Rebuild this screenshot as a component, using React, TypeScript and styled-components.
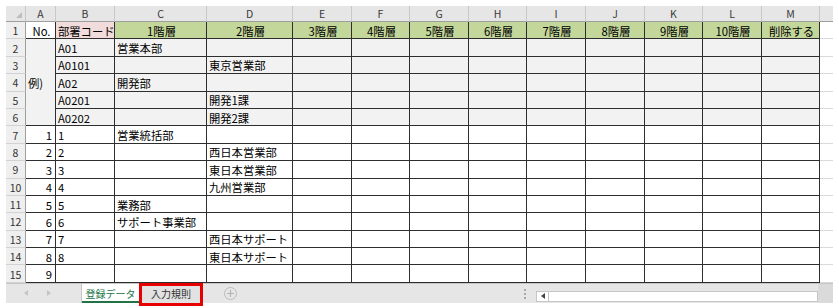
import React from "react";
import styled, { createGlobalStyle } from "styled-components";

const GlobalStyle = createGlobalStyle`
  html, body { margin: 0; padding: 0; background: #ffffff; }
  * { box-sizing: border-box; }
`;

const FONT = `"Noto Sans CJK JP", "Noto Sans", "Liberation Sans", sans-serif`;
const COLS = [20, 30, 59, 92, 86, 59, 58, 59, 58, 59, 59, 58, 59, 58, 13];
const LETTERS = ["A", "B", "C", "D", "E", "F", "G", "H", "I", "J", "K", "L", "M"];
const DARK = "#2e2e2e";

const Frame = styled.div`
  width: 839px;
  height: 308px;
  padding: 6px 6px 0 6px;
  background: #ffffff;
  font-family: ${FONT};
  overflow: hidden;
`;

const SheetGrid = styled.div`
  display: grid;
  grid-template-columns: ${COLS.map((c) => `${c}px`).join(" ")};
  grid-template-rows: 16px repeat(15, 17.4px);
  width: 827px;
`;

const Corner = styled.div`
  background: #e6e6e6;
  border-right: 1px solid #c8c8c8;
  border-bottom: 1px solid #9e9e9e;
  position: relative;
  &::after {
    content: "";
    position: absolute;
    right: 3px;
    bottom: 3px;
    width: 0;
    height: 0;
    border-left: 6px solid transparent;
    border-bottom: 6px solid #bdbdbd;
  }
`;

const ColHeader = styled.div`
  background: #e6e6e6;
  border-right: 1px solid #c8c8c8;
  border-bottom: 1px solid #9e9e9e;
  color: #3a3a3a;
  font-size: 10.5px;
  line-height: 15px;
  text-align: center;
`;

const RowHeader = styled.div`
  background: #efefef;
  border-right: 1px solid #9e9e9e;
  border-bottom: 1px solid #d2d2d2;
  color: #333333;
  font-size: 10.5px;
  display: flex;
  align-items: center;
  justify-content: center;
  padding-top: 1px;
`;

const Cell = styled.div<{ $bg?: string; $align?: "left" | "center" | "right"; $span?: number }>`
  background: ${(p) => p.$bg ?? "#ffffff"};
  border-right: 1px solid ${DARK};
  border-bottom: 1px solid ${DARK};
  color: #000000;
  font-size: 11.3px;
  white-space: nowrap;
  overflow: hidden;
  display: flex;
  align-items: center;
  padding: 1px ${(p) => (p.$align === "right" ? "3px" : "0")} 0 2px;
  justify-content: ${(p) =>
    p.$align === "center" ? "center" : p.$align === "right" ? "flex-end" : "flex-start"};
  ${(p) => (p.$span ? `grid-row: span ${p.$span};` : "")}
`;

const Spill = styled.div<{ $head?: boolean }>`
  background: ${(p) => (p.$head ? "#e6e6e6" : "#ffffff")};
  border-bottom: 1px solid ${(p) => (p.$head ? "#9e9e9e" : "#dadada")};
`;

const TabBar = styled.div`
  display: flex;
  align-items: flex-start;
  height: 20px;
  width: 827px;
  background: #e6e6e6;
  border-top: 1px solid #c6c6c6;
  overflow: visible;
  position: relative;
`;

const NavArea = styled.div`
  width: 75px;
  height: 19px;
  display: flex;
  align-items: center;
  padding-left: 18px;
  gap: 19px;
`;

const Tab = styled.div<{ $active?: boolean }>`
  width: 58px;
  height: 19px;
  display: flex;
  align-items: center;
  justify-content: center;
  font-size: 10px;
  background: ${(p) => (p.$active ? "#ffffff" : "transparent")};
  color: ${(p) => (p.$active ? "#217346" : "#333333")};
  border-left: 1px solid #c6c6c6;
  box-shadow: ${(p) => (p.$active ? "inset 0 -2px 0 #217346" : "none")};
`;

const MarkedTab = styled.div`
  width: 64px;
  height: 23px;
  margin-top: -1px;
  border: 3px solid #e60000;
  background: #e2e2e2;
  display: flex;
  align-items: center;
  justify-content: center;
  font-size: 10px;
  color: #333333;
  padding-bottom: 2px;
`;

const AddButton = styled.div`
  margin-left: 21px;
  margin-top: 3px;
  width: 13px;
  height: 13px;
  border-radius: 50%;
  border: 1px solid #bdbdbd;
  display: flex;
  align-items: center;
  justify-content: center;
`;

const Spacer = styled.div`
  flex: 1;
`;

const Splitter = styled.div`
  margin-top: 5px;
  margin-right: 10px;
  width: 3px;
  display: flex;
  flex-direction: column;
  align-items: center;
  gap: 2px;
  & > span {
    width: 2px;
    height: 2px;
    background: #a8a8a8;
  }
`;

const Scrollbar = styled.div`
  margin-top: 7px;
  width: 282px;
  height: 11px;
  background: #ffffff;
  border: 1px solid #c6c6c6;
  display: flex;
`;

const ScrollBtn = styled.div`
  width: 12px;
  height: 100%;
  border-right: 1px solid #c6c6c6;
  display: flex;
  align-items: center;
  justify-content: center;
`;

const Tail = styled.div`
  width: 15px;
  height: 19px;
  background: #dadada;
`;

type Align = "left" | "center" | "right";
type CellDef = { text?: string; align?: Align; bg?: string };

const GREY = "#f2f2f2";
const GREEN = "#c4d79b";
const PINK = "#f2dcdb";

const header: CellDef[] = [
  { text: "No.", align: "center" },
  { text: "部署コード", bg: PINK },
  ...Array.from({ length: 10 }, (_, i) => ({ text: `${i + 1}階層`, align: "center" as Align, bg: GREEN })),
  { text: "削除する", align: "center", bg: GREEN },
];

const examples: { b: string; c?: string; d?: string }[] = [
  { b: "A01", c: "営業本部" },
  { b: "A0101", d: "東京営業部" },
  { b: "A02", c: "開発部" },
  { b: "A0201", d: "開発1課" },
  { b: "A0202", d: "開発2課" },
];

const data: { a: string; b: string; c?: string; d?: string }[] = [
  { a: "1", b: "1", c: "営業統括部" },
  { a: "2", b: "2", d: "西日本営業部" },
  { a: "3", b: "3", d: "東日本営業部" },
  { a: "4", b: "4", d: "九州営業部" },
  { a: "5", b: "5", c: "業務部" },
  { a: "6", b: "6", c: "サポート事業部" },
  { a: "7", b: "7", d: "西日本サポート" },
  { a: "8", b: "8", d: "東日本サポート" },
  { a: "9", b: "" },
];

const Tri = ({ dir, color }: { dir: "l" | "r"; color: string }) => (
  <svg width="4" height="6" viewBox="0 0 4 6">
    <path d={dir === "l" ? "M4 0 L0 3 L4 6 Z" : "M0 0 L4 3 L0 6 Z"} fill={color} />
  </svg>
);

export default function App() {
  const rows: React.ReactNode[] = [];

  rows.push(<Corner key="corner" />);
  LETTERS.forEach((l) => rows.push(<ColHeader key={`h${l}`}>{l}</ColHeader>));
  rows.push(<Spill key="hs" $head />);

  rows.push(<RowHeader key="r1">1</RowHeader>);
  header.forEach((c, i) =>
    rows.push(
      <Cell key={`r1c${i}`} $bg={c.bg} $align={c.align}>
        {c.text}
      </Cell>
    )
  );
  rows.push(<Spill key="r1s" />);

  examples.forEach((e, i) => {
    const r = i + 2;
    rows.push(<RowHeader key={`r${r}`}>{r}</RowHeader>);
    if (i === 0) {
      rows.push(
        <Cell key="merged" $bg={GREY} $span={5}>
          例)
        </Cell>
      );
    }
    rows.push(<Cell key={`r${r}b`} $bg={GREY}>{e.b}</Cell>);
    rows.push(<Cell key={`r${r}c`} $bg={GREY}>{e.c}</Cell>);
    rows.push(<Cell key={`r${r}d`} $bg={GREY}>{e.d}</Cell>);
    for (let k = 0; k < 9; k++) rows.push(<Cell key={`r${r}x${k}`} $bg={GREY} />);
    rows.push(<Spill key={`r${r}s`} />);
  });

  data.forEach((d, i) => {
    const r = i + 7;
    rows.push(<RowHeader key={`r${r}`}>{r}</RowHeader>);
    rows.push(<Cell key={`r${r}a`} $align="right">{d.a}</Cell>);
    rows.push(<Cell key={`r${r}b`}>{d.b}</Cell>);
    rows.push(<Cell key={`r${r}c`}>{d.c}</Cell>);
    rows.push(<Cell key={`r${r}d`}>{d.d}</Cell>);
    for (let k = 0; k < 9; k++) rows.push(<Cell key={`r${r}x${k}`} />);
    rows.push(<Spill key={`r${r}s`} />);
  });

  return (
    <>
      <GlobalStyle />
      <Frame>
        <SheetGrid>{rows}</SheetGrid>
        <TabBar>
          <NavArea>
            <Tri dir="l" color="#c4c4c4" />
            <Tri dir="r" color="#c4c4c4" />
          </NavArea>
          <Tab $active>登録データ</Tab>
          <MarkedTab>入力規則</MarkedTab>
          <AddButton>
            <svg width="9" height="9" viewBox="0 0 9 9">
              <path d="M4.5 1 V8 M1 4.5 H8" stroke="#b5b5b5" strokeWidth="1.2" />
            </svg>
          </AddButton>
          <Spacer />
          <Splitter>
            <span />
            <span />
            <span />
          </Splitter>
          <Scrollbar>
            <ScrollBtn>
              <Tri dir="l" color="#444444" />
            </ScrollBtn>
          </Scrollbar>
          <Tail />
        </TabBar>
      </Frame>
    </>
  );
}
